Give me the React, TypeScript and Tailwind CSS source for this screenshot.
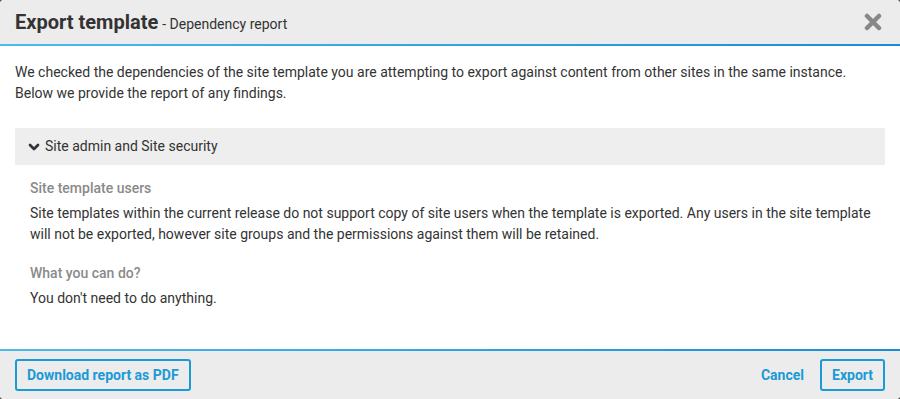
import { ChevronDown } from 'lucide-react';

export default function App() {
  return (
    <div className="w-[900px] h-[399px] bg-[#555] font-['Roboto',sans-serif] text-[#333]">
      <div className="flex flex-col h-full bg-white rounded-[4px] overflow-hidden">
        {/* Header */}
        <div className="h-[44px] shrink-0 bg-[#ececec] flex items-center justify-between pl-[15px] pr-[18px]">
          <h1 className="flex items-baseline">
            <span className="text-[20px] font-bold text-[#333]">Export template</span>
            <span className="text-[14px] text-[#333] ml-[4px]">- Dependency report</span>
          </h1>
          <svg width="18" height="18" viewBox="0 0 18 18" className="text-[#888]">
            <path d="M3 3 L15 15 M15 3 L3 15" stroke="currentColor" strokeWidth="4.5" strokeLinecap="round" />
          </svg>
        </div>
        <div className="h-[2px] shrink-0 bg-gradient-to-r from-[#4cbaea] to-[#1a8bd6]" />

        {/* Body */}
        <div className="flex-1 px-[15px] pt-[16px] text-[14px] leading-[21px]">
          <p>
            We checked the dependencies of the site template you are attempting to export against content from other sites in the same instance.
            <br />
            Below we provide the report of any findings.
          </p>

          <div className="mt-[24px] h-[37px] bg-[#eeeeee] flex items-center pl-[11px]">
            <ChevronDown className="w-[16px] h-[16px] text-[#333]" strokeWidth={4} />
            <span className="ml-[3px]">Site admin and Site security</span>
          </div>

          <div className="pl-[15px] pt-[13px]">
            <div className="font-medium text-[#8a8a8a]">Site template users</div>
            <p className="mt-[4px]">
              Site templates within the current release do not support copy of site users when the template is exported. Any users in the site template will not be exported, however site groups and the permissions against them will be retained.
            </p>
            <div className="mt-[18px] font-medium text-[#8a8a8a]">What you can do?</div>
            <p className="mt-[4px]">You don't need to do anything.</p>
          </div>
        </div>

        {/* Footer */}
        <div className="h-[2px] shrink-0 bg-gradient-to-r from-[#4cbaea] to-[#1a8bd6]" />
        <div className="h-[48px] shrink-0 bg-[#ececec] flex items-center justify-between px-[15px]">
          <button className="h-[32px] px-[10px] border-2 border-[#1a9ad6] rounded-[3px] text-[14px] font-bold text-[#1a9ad6]">
            Download report as PDF
          </button>
          <div className="flex items-center gap-[16px]">
            <button className="text-[14px] font-bold text-[#1a9ad6]">Cancel</button>
            <button className="h-[32px] px-[10px] border-2 border-[#1a9ad6] rounded-[3px] text-[14px] font-bold text-[#1a9ad6]">
              Export
            </button>
          </div>
        </div>
      </div>
    </div>
  );
}
